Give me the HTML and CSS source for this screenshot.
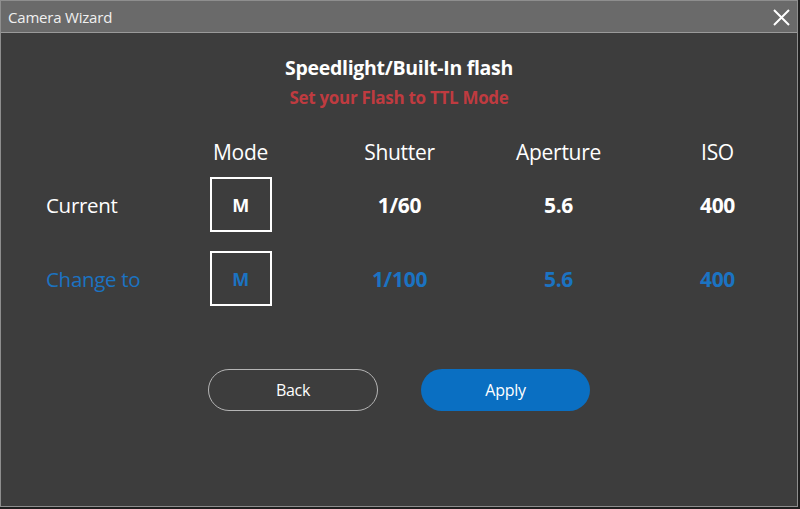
FILE: index.html
```html
<!DOCTYPE html>
<html>
<head>
<meta charset="utf-8">
<link rel="stylesheet" href="styles.css">
</head>
<body>
<div class="window">
  <div class="titlebar">
    <span class="title">Camera Wizard</span>
    <span class="close" aria-label="Close">
      <svg width="17" height="17" viewBox="0 0 17 17"><path d="M1 1 L16 16 M16 1 L1 16" stroke="#ffffff" stroke-width="2" fill="none"/></svg>
    </span>
  </div>
  <div class="content">
    <div class="heading">Speedlight/Built-In flash</div>
    <div class="subtitle">Set your Flash to TTL Mode</div>
    <div class="table">
      <div class="cell head"></div>
      <div class="cell head">Mode</div>
      <div class="cell head">Shutter</div>
      <div class="cell head">Aperture</div>
      <div class="cell head">ISO</div>

      <div class="cell label">Current</div>
      <div class="cell"><div class="modebox">M</div></div>
      <div class="cell value">1/60</div>
      <div class="cell value">5.6</div>
      <div class="cell value">400</div>

      <div class="cell label blue r3">Change to</div>
      <div class="cell blue r3"><div class="modebox">M</div></div>
      <div class="cell value blue r3">1/100</div>
      <div class="cell value blue r3">5.6</div>
      <div class="cell value blue r3">400</div>
    </div>
    <div class="buttons">
      <button class="btn back">Back</button>
      <button class="btn apply">Apply</button>
    </div>
  </div>
</div>
</body>
</html>
```

FILE: styles.css
```css
html, body {
  margin: 0;
  padding: 0;
  background: #1f1f1f;
  font-family: "Open Sans", "Noto Sans", sans-serif;
}
.window {
  width: 796px;
  height: 505px;
  border: 1px solid #8e8e8e;
  background: #3d3d3d;
  display: flex;
  flex-direction: column;
}
.titlebar {
  height: 31px;
  background: #6a6a6a;
  border-bottom: 1px solid #9a9a9a;
  display: flex;
  align-items: center;
  justify-content: space-between;
  padding: 0 7px 0 7px;
}
.title {
  color: #f0f0f0;
  font-size: 15px;
  letter-spacing: -0.2px;
}
.close {
  display: flex;
  margin-top: 1px;
}
.content {
  display: flex;
  flex-direction: column;
  align-items: stretch;
}
.heading {
  margin-top: 23px;
  text-align: center;
  color: #ffffff;
  font-weight: 700;
  font-size: 19.5px;
  line-height: 24px;
  letter-spacing: -0.3px;
}
.subtitle {
  margin-top: 6px;
  text-align: center;
  color: #bf3b40;
  font-weight: 700;
  font-size: 17px;
  line-height: 24px;
  letter-spacing: -0.3px;
}
.table {
  margin-top: 27px;
  display: grid;
  grid-template-columns: 115px repeat(4, 159px);
  grid-template-rows: 30px 55px 64px;
  row-gap: 10px;
  padding-left: 45px;
  color: #ffffff;
  font-size: 20.5px;
}
.cell {
  display: flex;
  align-items: center;
  justify-content: center;
  letter-spacing: -0.3px;
}
.r3 {
  margin-top: 9px;
}
.head {
  line-height: 30px;
  font-size: 21px;
}
.label {
  justify-content: flex-start;
}
.value {
  font-weight: 700;
  font-size: 21px;
}
.blue {
  color: #1b73c2;
}
.modebox {
  width: 58px;
  height: 51px;
  border: 2px solid #ffffff;
  display: flex;
  align-items: center;
  justify-content: center;
  font-weight: 700;
  font-size: 18px;
}
.buttons {
  margin-top: 63px;
  display: flex;
  justify-content: center;
  gap: 43px;
}
.btn {
  width: 170px;
  height: 42px;
  border-radius: 21px;
  font-family: "Open Sans", "Noto Sans", sans-serif;
  font-size: 16px;
  letter-spacing: -0.3px;
  color: #ffffff;
  cursor: pointer;
}
.back {
  background: transparent;
  border: 1px solid #b5b5b5;
}
.apply {
  background: #0a6fc2;
  border: none;
  width: 169px;
}
```
